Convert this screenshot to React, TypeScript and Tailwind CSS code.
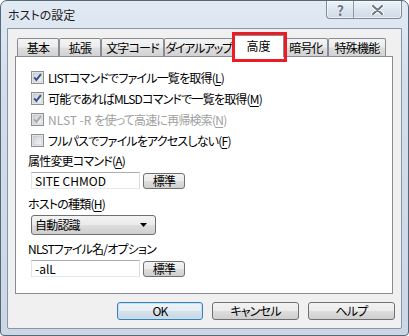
import React from 'react';

type CheckState = 'on' | 'off' | 'dis';

const CheckBox = ({ state }: { state: CheckState }) => (
  <svg width="13" height="13" viewBox="0 0 13 13" className="shrink-0">
    <defs>
      <linearGradient id="cbInner" x1="0" y1="0" x2="1" y2="1">
        <stop offset="0" stopColor="#cbcfd5" />
        <stop offset="1" stopColor="#f6f6f6" />
      </linearGradient>
    </defs>
    <rect x="0.5" y="0.5" width="12" height="12" fill="#f4f4f4" stroke="#8e8f8f" />
    <rect x="2" y="2" width="9" height="9" fill="url(#cbInner)" stroke="#b5b9bf" strokeWidth="0.6" />
    {state !== 'off' && (
      <path
        d="M3.2 6.4 L5.4 8.9 L9.9 3.2"
        fill="none"
        stroke={state === 'on' ? '#3a4f8c' : '#a9a9a9'}
        strokeWidth="1.9"
      />
    )}
  </svg>
);

const Key = ({ k }: { k: string }) => (
  <>
    (<span className="underline underline-offset-2">{k}</span>)
  </>
);

const btnFace =
  'bg-[linear-gradient(#f3f3f3_0%,#ebebeb_48%,#dddddd_52%,#cfcfcf_100%)] border border-[#707070] rounded-[3px]';

const tabFace =
  'bg-[linear-gradient(#f4f4f4_0%,#ececec_48%,#dedede_52%,#d2d2d2_100%)] border border-b-0 border-[#898c95] rounded-t-[2px]';

const tabs = [
  { label: '基本', w: 'w-[42px]', t: '' },
  { label: '拡張', w: 'w-[42px]', t: '' },
  { label: '文字コード', w: 'w-[63px]', t: '' },
  { label: 'ダイアルアップ', w: 'w-[69px]', t: 'tracking-[-1.3px]' },
];

export default function App() {
  return (
    <div className="h-[336px] w-[409px] bg-white">
      <div className="flex h-full w-full flex-col rounded-t-[7px] rounded-b-[4px] border border-[#56677a] bg-[linear-gradient(#e2eaf4_0%,#d3deea_25%,#cbd7e5_100%)] font-['Noto_Sans_CJK_JP',sans-serif] text-[12px] leading-none tracking-[-0.8px] text-black [font-feature-settings:'palt']">
        {/* title bar */}
        <div className="flex h-[27px] items-start">
          <div className="flex h-full flex-1 items-center pl-[7px] text-[12px] tracking-normal text-[#1b1b1b]">
            ホストの設定
          </div>
          <div className="mr-[6px] flex h-[18px] overflow-hidden rounded-b-[4px] border border-t-0 border-[#7c8a9b] bg-[linear-gradient(#eef3f9,#dbe4ee_55%,#cfdae6)] shadow-[inset_0_0_0_1px_rgba(255,255,255,0.6)]">
            <div className="flex w-[27px] items-center justify-center border-r border-[#8b99a9] text-[14px] font-bold text-[#6d7886] [text-shadow:0_0_2px_#ffffff]">
              ?
            </div>
            <div className="flex w-[47px] items-center justify-center">
              <svg width="13" height="10" viewBox="0 0 13 10">
                <path d="M2 1 L11 9 M11 1 L2 9" stroke="#ffffff" strokeWidth="4" strokeLinecap="round" />
                <path d="M2 1 L11 9 M11 1 L2 9" stroke="#6f7a88" strokeWidth="2.2" strokeLinecap="round" />
              </svg>
            </div>
          </div>
        </div>

        {/* client area */}
        <div className="mx-[6px] mb-[6px] flex flex-1 flex-col rounded-b-[2px] border border-[#8797a9] bg-[#f0f0f0]">
          <div className="flex flex-col pl-[7px] pr-[8px] pt-[6px]">
            {/* tab strip */}
            <div className="flex h-[21px] items-end pl-[2px]">
              {tabs.map((t) => (
                <div
                  key={t.label}
                  className={`${t.w} ${t.t} ${tabFace} flex h-[18px] items-center justify-center overflow-hidden whitespace-nowrap`}
                >
                  {t.label}
                </div>
              ))}
              <div className="relative z-10 -mb-px flex h-[22px] w-[51px] items-center justify-center border border-b-0 border-[#898c95] bg-white pb-[2px] tracking-normal">
                高度
                <div className="pointer-events-none absolute -left-[2px] -top-[4px] h-[30px] w-[55px] border-[3px] border-[#ec1c24]" />
              </div>
              <div className={`w-[44px] ${tabFace} flex h-[18px] items-center justify-center`}>暗号化</div>
              <div className={`w-[58px] ${tabFace} flex h-[18px] items-center justify-center`}>特殊機能</div>
            </div>

            {/* tab panel */}
            <div className="flex h-[238px] flex-col border border-[#898c95] bg-white pl-[15px] pt-[10px]">
              <div className="flex h-[21px] items-center gap-[4px]">
                <CheckBox state="on" />
                <span>
                  LISTコマンドでファイル一覧を取得<Key k="L" />
                </span>
              </div>
              <div className="flex h-[21px] items-center gap-[4px]">
                <CheckBox state="on" />
                <span>
                  可能であればMLSDコマンドで一覧を取得<Key k="M" />
                </span>
              </div>
              <div className="flex h-[21px] items-center gap-[4px] text-[#a0a0a0]">
                <CheckBox state="dis" />
                <span>
                  <span className="tracking-normal">NLST -R </span>を使って高速に再帰検索<Key k="N" />
                </span>
              </div>
              <div className="flex h-[21px] items-center gap-[4px]">
                <CheckBox state="off" />
                <span>
                  フルパスでファイルをアクセスしない<Key k="F" />
                </span>
              </div>

              <div className="-ml-[3px] mt-[2px] flex h-[16px] items-center">
                属性変更コマンド<Key k="A" />
              </div>
              <div className="mt-[3px] flex h-[17px] items-center gap-[3px]">
                <div className="flex h-[17px] w-[109px] items-center border border-[#abadb3] border-b-[#e3e9ef] border-l-[#e2e3ea] border-r-[#dbdfe6] bg-white pl-[3px] tracking-normal">
                  SITE CHMOD
                </div>
                <div className={`${btnFace} flex h-[16px] w-[42px] items-center justify-center`}>標準</div>
              </div>

              <div className="-ml-[3px] mt-[7px] flex h-[16px] items-center">
                ホストの種類<Key k="H" />
              </div>
              <div
                className={`${btnFace} mt-[3px] flex h-[20px] w-[125px] items-center justify-between pl-[3px] pr-[8px]`}
              >
                <span>自動認識</span>
                <svg width="7" height="4" viewBox="0 0 7 4">
                  <path d="M0 0 H7 L3.5 4 Z" fill="#000" />
                </svg>
              </div>

              <div className="-ml-[3px] mt-[6px] flex h-[16px] items-center">NLSTファイル名/オプション</div>
              <div className="mt-[3px] flex h-[17px] items-center gap-[3px]">
                <div className="flex h-[17px] w-[109px] items-center border border-[#abadb3] border-b-[#e3e9ef] border-l-[#e2e3ea] border-r-[#dbdfe6] bg-white pl-[3px] tracking-normal">
                  -alL
                </div>
                <div className={`${btnFace} flex h-[16px] w-[42px] items-center justify-center`}>標準</div>
              </div>
            </div>
          </div>

          {/* dialog buttons */}
          <div className="mt-[8px] flex justify-end gap-[9px] pr-[6px]">
            <div className="flex h-[18px] w-[86px] items-center justify-center rounded-[3px] border border-[#3c7fb1] bg-[linear-gradient(#eef5fa_0%,#e4edf3_48%,#d5e1ea_52%,#cad8e3_100%)] shadow-[inset_0_0_0_1px_#bfe3f7]">
              OK
            </div>
            <div className={`${btnFace} flex h-[18px] w-[87px] items-center justify-center`}>キャンセル</div>
            <div className={`${btnFace} flex h-[18px] w-[87px] items-center justify-center`}>ヘルプ</div>
          </div>
        </div>
      </div>
    </div>
  );
}
